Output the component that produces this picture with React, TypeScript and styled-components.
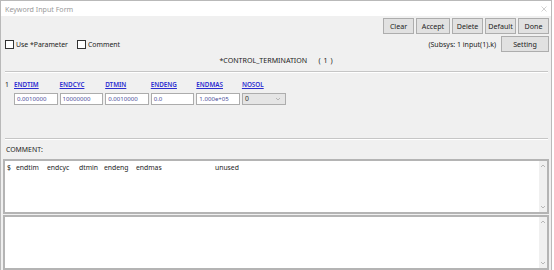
import React from "react";
import styled, { createGlobalStyle } from "styled-components";

const GlobalStyle = createGlobalStyle`
  html, body {
    margin: 0;
    padding: 0;
    background: #ffffff;
  }
  body {
    font-family: "Noto Sans", "Open Sans", sans-serif;
    color: #222222;
  }
`;

const Window = styled.div`
  width: 552px;
  height: 270px;
  box-sizing: border-box;
  border: 1px solid #b9b9b9;
  border-bottom: none;
  display: flex;
  flex-direction: column;
  background: #f0f0f0;
`;

const TitleBar = styled.div`
  height: 16px;
  background: #ffffff;
  display: flex;
  align-items: center;
  justify-content: space-between;
  padding: 0 4px 0 4px;
  font-size: 7.1px;
  color: #9a9a9a;
`;

const Body = styled.div`
  flex: 1;
  display: flex;
  flex-direction: column;
  padding: 2px 1px 0 1px;
`;

const ToolRow = styled.div`
  display: flex;
  justify-content: flex-end;
  gap: 2px;
  padding-right: 1px;
`;

const Button = styled.button<{ $w: number }>`
  width: ${(p) => p.$w}px;
  height: 16px;
  padding: 0;
  background: #e1e1e1;
  border: 1px solid #adadad;
  font-family: inherit;
  font-size: 7.1px;
  color: #222;
`;

const OptionRow = styled.div`
  display: flex;
  align-items: center;
  justify-content: space-between;
  margin-top: 2px;
  padding: 0 1px 0 3px;
`;

const Checks = styled.div`
  display: flex;
  align-items: center;
  gap: 9px;
`;

const CheckLabel = styled.label`
  display: flex;
  align-items: center;
  gap: 2px;
  font-size: 6.9px;
`;

const Box = styled.span`
  width: 7px;
  height: 7px;
  border: 1px solid #333;
  background: #fff;
`;

const SubsysGroup = styled.div`
  display: flex;
  align-items: center;
  gap: 5px;
  font-size: 7px;
`;

const KeywordTitle = styled.div`
  text-align: center;
  font-size: 7.1px;
  margin-top: 3px;
  height: 10px;
  line-height: 10px;
  word-spacing: 1px;
`;

const Separator = styled.div<{ $top: number }>`
  margin: ${(p) => p.$top}px 2px 0 3px;
  height: 1px;
  background: #c6c6c6;
  border-bottom: 1px solid #ffffff;
`;

const CardRow = styled.div`
  display: flex;
  margin-top: 7px;
  padding-left: 3px;
`;

const RowIndex = styled.div`
  width: 9px;
  font-size: 6.8px;
  line-height: 9px;
`;

const Grid = styled.div`
  display: grid;
  grid-template-columns: repeat(6, 43.7px);
  column-gap: 1.9px;
  row-gap: 4px;
`;

const FieldLabel = styled.a`
  font-size: 6.3px;
  font-weight: 600;
  color: #2b2bd0;
  text-decoration: underline;
  line-height: 9px;
`;

const Field = styled.div`
  height: 12px;
  box-sizing: border-box;
  border: 1px solid #acacac;
  background: #ffffff;
  font-size: 6.1px;
  color: #4a4a9a;
  padding-left: 2px;
  line-height: 10px;
`;

const Select = styled(Field)`
  background: #e5e5e5;
  border-color: #adadad;
  color: #333;
  display: flex;
  align-items: center;
  justify-content: space-between;
  padding: 0 4px 0 2px;
  font-size: 6.8px;
`;

const CommentLabel = styled.div`
  font-size: 6.9px;
  margin: 5px 0 0 4px;
  height: 10px;
  line-height: 10px;
`;

const TextBox = styled.div<{ $h: number; $top: number }>`
  height: ${(p) => p.$h}px;
  margin-top: ${(p) => p.$top}px;
  box-sizing: border-box;
  margin-left: 1px;
  margin-right: 1px;
  border: 2px solid #b4b4b4;
  background: #ffffff;
  display: flex;
`;

const TextContent = styled.div`
  flex: 1;
  padding: 2px 0 0 2px;
  font-size: 6.8px;
  line-height: 10px;
  display: flex;
`;

const Col = styled.span<{ $w: number }>`
  width: ${(p) => p.$w}px;
  flex: none;
`;

const ScrollBar = styled.div`
  width: 8px;
  background: #f0f0f0;
  display: flex;
  flex-direction: column;
  justify-content: space-between;
  align-items: center;
  padding: 3px 0;
`;

const Chevron = ({ up }: { up?: boolean }) => (
  <svg width="6" height="4" viewBox="0 0 6 4">
    <path
      d={up ? "M1 3 L3 1 L5 3" : "M1 1 L3 3 L5 1"}
      stroke="#b0b0b0"
      strokeWidth="0.9"
      fill="none"
    />
  </svg>
);

const Scroll = () => (
  <ScrollBar>
    <Chevron up />
    <Chevron />
  </ScrollBar>
);

const fields = [
  { name: "ENDTIM", value: "0.0010000" },
  { name: "ENDCYC", value: "10000000" },
  { name: "DTMIN", value: "0.0010000" },
  { name: "ENDENG", value: "0.0" },
  { name: "ENDMAS", value: "1.000e+05" },
];

const commentCols: [string, number][] = [
  ["$", 9],
  ["endtim", 31],
  ["endcyc", 32],
  ["dtmin", 25],
  ["endeng", 32],
  ["endmas", 79],
  ["unused", 40],
];

export default function App() {
  return (
    <>
      <GlobalStyle />
      <Window>
        <TitleBar>
          <span>Keyword Input Form</span>
          <svg width="6" height="6" viewBox="0 0 6 6">
            <path d="M0.5 0.5 L5.5 5.5 M5.5 0.5 L0.5 5.5" stroke="#c4c4c4" strokeWidth="0.8" />
          </svg>
        </TitleBar>
        <Body>
          <ToolRow>
            <Button $w={31}>Clear</Button>
            <Button $w={34}>Accept</Button>
            <Button $w={31}>Delete</Button>
            <Button $w={31}>Default</Button>
            <Button $w={31}>Done</Button>
          </ToolRow>
          <OptionRow>
            <Checks>
              <CheckLabel>
                <Box />
                Use *Parameter
              </CheckLabel>
              <CheckLabel>
                <Box />
                Comment
              </CheckLabel>
            </Checks>
            <SubsysGroup>
              <span>(Subsys: 1 input(1).k)</span>
              <Button $w={48}>Setting</Button>
            </SubsysGroup>
          </OptionRow>
          <KeywordTitle>*CONTROL_TERMINATION&nbsp;&nbsp;&nbsp;&nbsp;( 1 )</KeywordTitle>
          <Separator $top={6} />
          <CardRow>
            <RowIndex>1</RowIndex>
            <Grid>
              {fields.map((f) => (
                <FieldLabel key={f.name}>{f.name}</FieldLabel>
              ))}
              <FieldLabel>NOSOL</FieldLabel>
              {fields.map((f) => (
                <Field key={f.name}>{f.value}</Field>
              ))}
              <Select>
                <span>0</span>
                <Chevron />
              </Select>
            </Grid>
          </CardRow>
          <Separator $top={33} />
          <CommentLabel>COMMENT:</CommentLabel>
          <TextBox $h={55} $top={4}>
            <TextContent>
              {commentCols.map(([t, w]) => (
                <Col key={t} $w={w}>
                  {t}
                </Col>
              ))}
            </TextContent>
            <Scroll />
          </TextBox>
          <TextBox $h={55} $top={1}>
            <TextContent />
            <Scroll />
          </TextBox>
        </Body>
      </Window>
    </>
  );
}
